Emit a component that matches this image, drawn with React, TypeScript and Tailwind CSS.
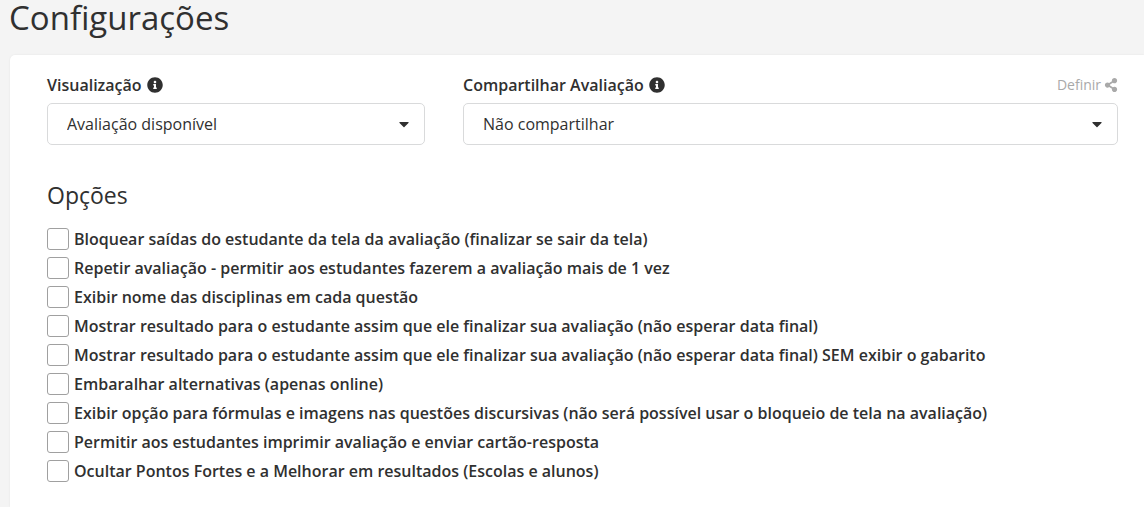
import { FaCaretDown, FaInfoCircle, FaShareAlt } from 'react-icons/fa';

const options = [
  { id: 'bloquear', label: 'Bloquear saídas do estudante da tela da avaliação (finalizar se sair da tela)' },
  { id: 'repetir', label: 'Repetir avaliação - permitir aos estudantes fazerem a avaliação mais de 1 vez' },
  { id: 'disciplinas', label: 'Exibir nome das disciplinas em cada questão' },
  { id: 'resultado', label: 'Mostrar resultado para o estudante assim que ele finalizar sua avaliação (não esperar data final)' },
  { id: 'sem-gabarito', label: 'Mostrar resultado para o estudante assim que ele finalizar sua avaliação (não esperar data final) SEM exibir o gabarito' },
  { id: 'embaralhar', label: 'Embaralhar alternativas (apenas online)' },
  { id: 'formulas', label: 'Exibir opção para fórmulas e imagens nas questões discursivas (não será possível usar o bloqueio de tela na avaliação)' },
  { id: 'imprimir', label: 'Permitir aos estudantes imprimir avaliação e enviar cartão-resposta' },
  { id: 'ocultar', label: 'Ocultar Pontos Fortes e a Melhorar em resultados (Escolas e alunos)' },
];

function Select({ id, value }: { id: string; value: string }) {
  return (
    <div className="relative">
      <select
        id={id}
        className="block h-[42px] w-full appearance-none rounded-[5px] border border-[#d9dadb] bg-white pl-[19px] pr-10 text-base text-[#303030]"
      >
        <option>{value}</option>
      </select>
      <FaCaretDown className="pointer-events-none absolute right-[13px] top-[13px] h-4 w-4 text-[#303030]" />
    </div>
  );
}

export default function App() {
  return (
    <div className="flex min-h-screen flex-col bg-[#f4f4f4] pl-[9px] font-['Open_Sans',sans-serif] text-[#303030]">
      <h1 className="pb-[19px] text-[33px] leading-9">Configurações</h1>

      <main className="ml-px flex-1 rounded-tl-[5px] bg-white pb-5 pl-[37px] pr-[26px] pt-[18px] shadow-[0_0_2px_rgba(0,0,0,0.08)]">
        <div className="grid grid-cols-[378fr_655fr] gap-x-[38px]">
          <div>
            <div className="mb-1.5 flex h-6 items-center gap-[5px]">
              <label htmlFor="visualizacao" className="text-base font-semibold">Visualização</label>
              <FaInfoCircle className="h-4 w-4" />
            </div>
            <Select id="visualizacao" value="Avaliação disponível" />
          </div>

          <div>
            <div className="mb-1.5 flex h-6 items-center gap-[5px]">
              <label htmlFor="compartilhar" className="text-base font-semibold">Compartilhar Avaliação</label>
              <FaInfoCircle className="h-4 w-4" />
              <a href="#" className="ml-auto flex items-center gap-[3px] text-sm text-[#a9a9a9]">
                Definir
                <FaShareAlt className="h-3.5 w-3.5" />
              </a>
            </div>
            <Select id="compartilhar" value="Não compartilhar" />
          </div>
        </div>

        <h2 className="mt-8 text-[23px] leading-9">Opções</h2>

        <ul className="mt-3.5 flex flex-col gap-[5px]">
          {options.map(option => (
            <li key={option.id} className="flex h-6 items-center gap-[5px]">
              <input
                id={option.id}
                type="checkbox"
                className="h-[22px] w-[22px] shrink-0 appearance-none rounded-[3px] border border-[#a0a0a0] bg-white checked:bg-gray-700"
              />
              <label htmlFor={option.id} className="text-base font-semibold">{option.label}</label>
            </li>
          ))}
        </ul>
      </main>
    </div>
  );
}
